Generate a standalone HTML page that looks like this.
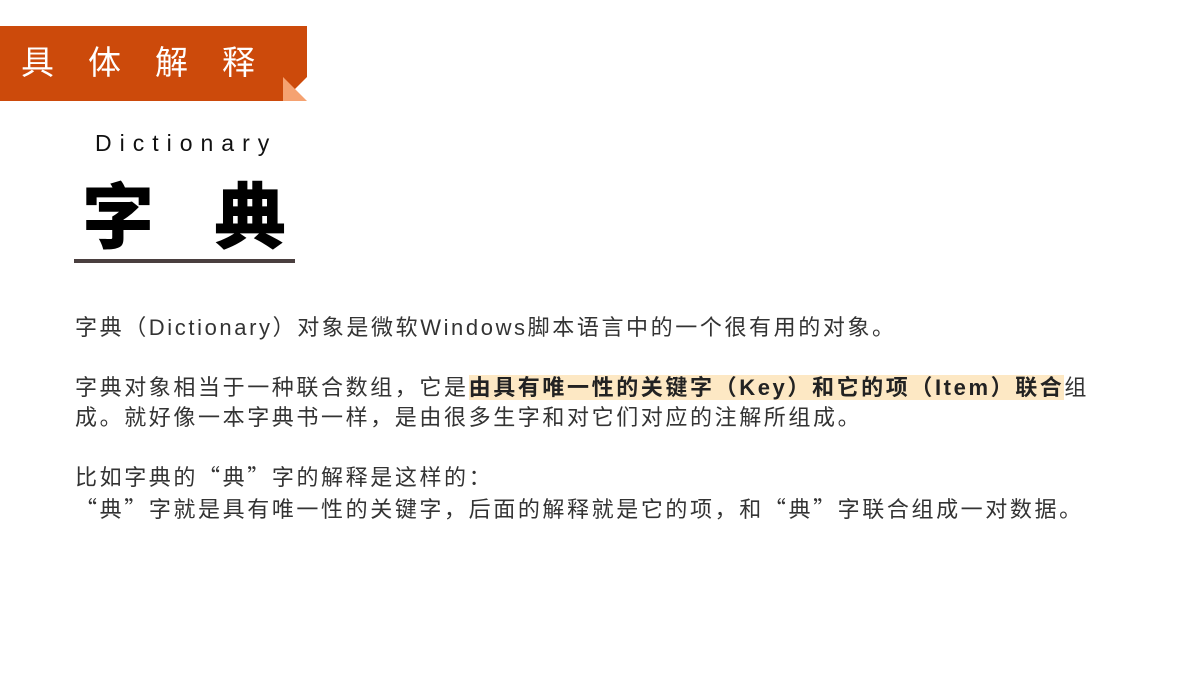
<!DOCTYPE html>
<html><head><meta charset="utf-8"><style>
body{margin:0;width:1200px;height:675px;background:#fff;position:relative;overflow:hidden;font-family:"Liberation Sans","Noto Sans CJK SC",sans-serif;}
.banner{position:absolute;left:0;top:26px;width:307px;height:75px;background:#cc4a0b;}
.fold{position:absolute;left:283px;top:77px;width:0;height:0;border-top:24px solid transparent;border-left:24px solid #f5a271;}
.fold2{position:absolute;left:283px;top:77px;width:24px;height:24px;background:#fff;clip-path:polygon(100% 0,100% 100%,0 100%);}
.bt{position:absolute;left:21px;top:43px;color:#fff;font-size:33px;letter-spacing:34px;line-height:40px;white-space:nowrap;}
.dic{position:absolute;left:95px;top:128px;font-size:23px;letter-spacing:8px;color:#111;line-height:30px;}
.big{position:absolute;top:170px;font-size:72px;font-weight:900;color:#000;line-height:84px;font-family:"Noto Sans CJK SC",sans-serif;}
.line{position:absolute;left:74px;top:259px;width:221px;height:4px;background:#4a3f3f;}
.t{position:absolute;left:75px;font-size:22px;color:#333;line-height:30px;white-space:nowrap;letter-spacing:2.6px;}
.hl{background:#fde8c4;font-weight:bold;color:#222;}
.q{font-family:"Noto Sans CJK SC",sans-serif;}
</style></head><body>
<div class="banner"></div>
<div class="fold2"></div>
<div class="fold"></div>
<div class="bt">具体解释</div>
<div class="dic">Dictionary</div>
<div class="big" style="left:82px">字</div>
<div class="big" style="left:214px">典</div>
<div class="line"></div>
<div class="t" style="top:313px">字典（Dictionary）对象是微软Windows脚本语言中的一个很有用的对象。</div>
<div class="t" style="top:373px">字典对象相当于一种联合数组，它是<span class="hl">由具有唯一性的关键字（Key）和它的项（Item）联合</span>组</div>
<div class="t" style="top:403px">成。就好像一本字典书一样，是由很多生字和对它们对应的注解所组成。</div>
<div class="t" style="top:461px">比如字典的<span class="q">“</span>典<span class="q">”</span>字的解释是这样的<span class="q">：</span></div>
<div class="t" style="top:493px"><span class="q">“</span>典<span class="q">”</span>字就是具有唯一性的关键字，后面的解释就是它的项，和<span class="q">“</span>典<span class="q">”</span>字联合组成一对数据。</div>
</body></html>
